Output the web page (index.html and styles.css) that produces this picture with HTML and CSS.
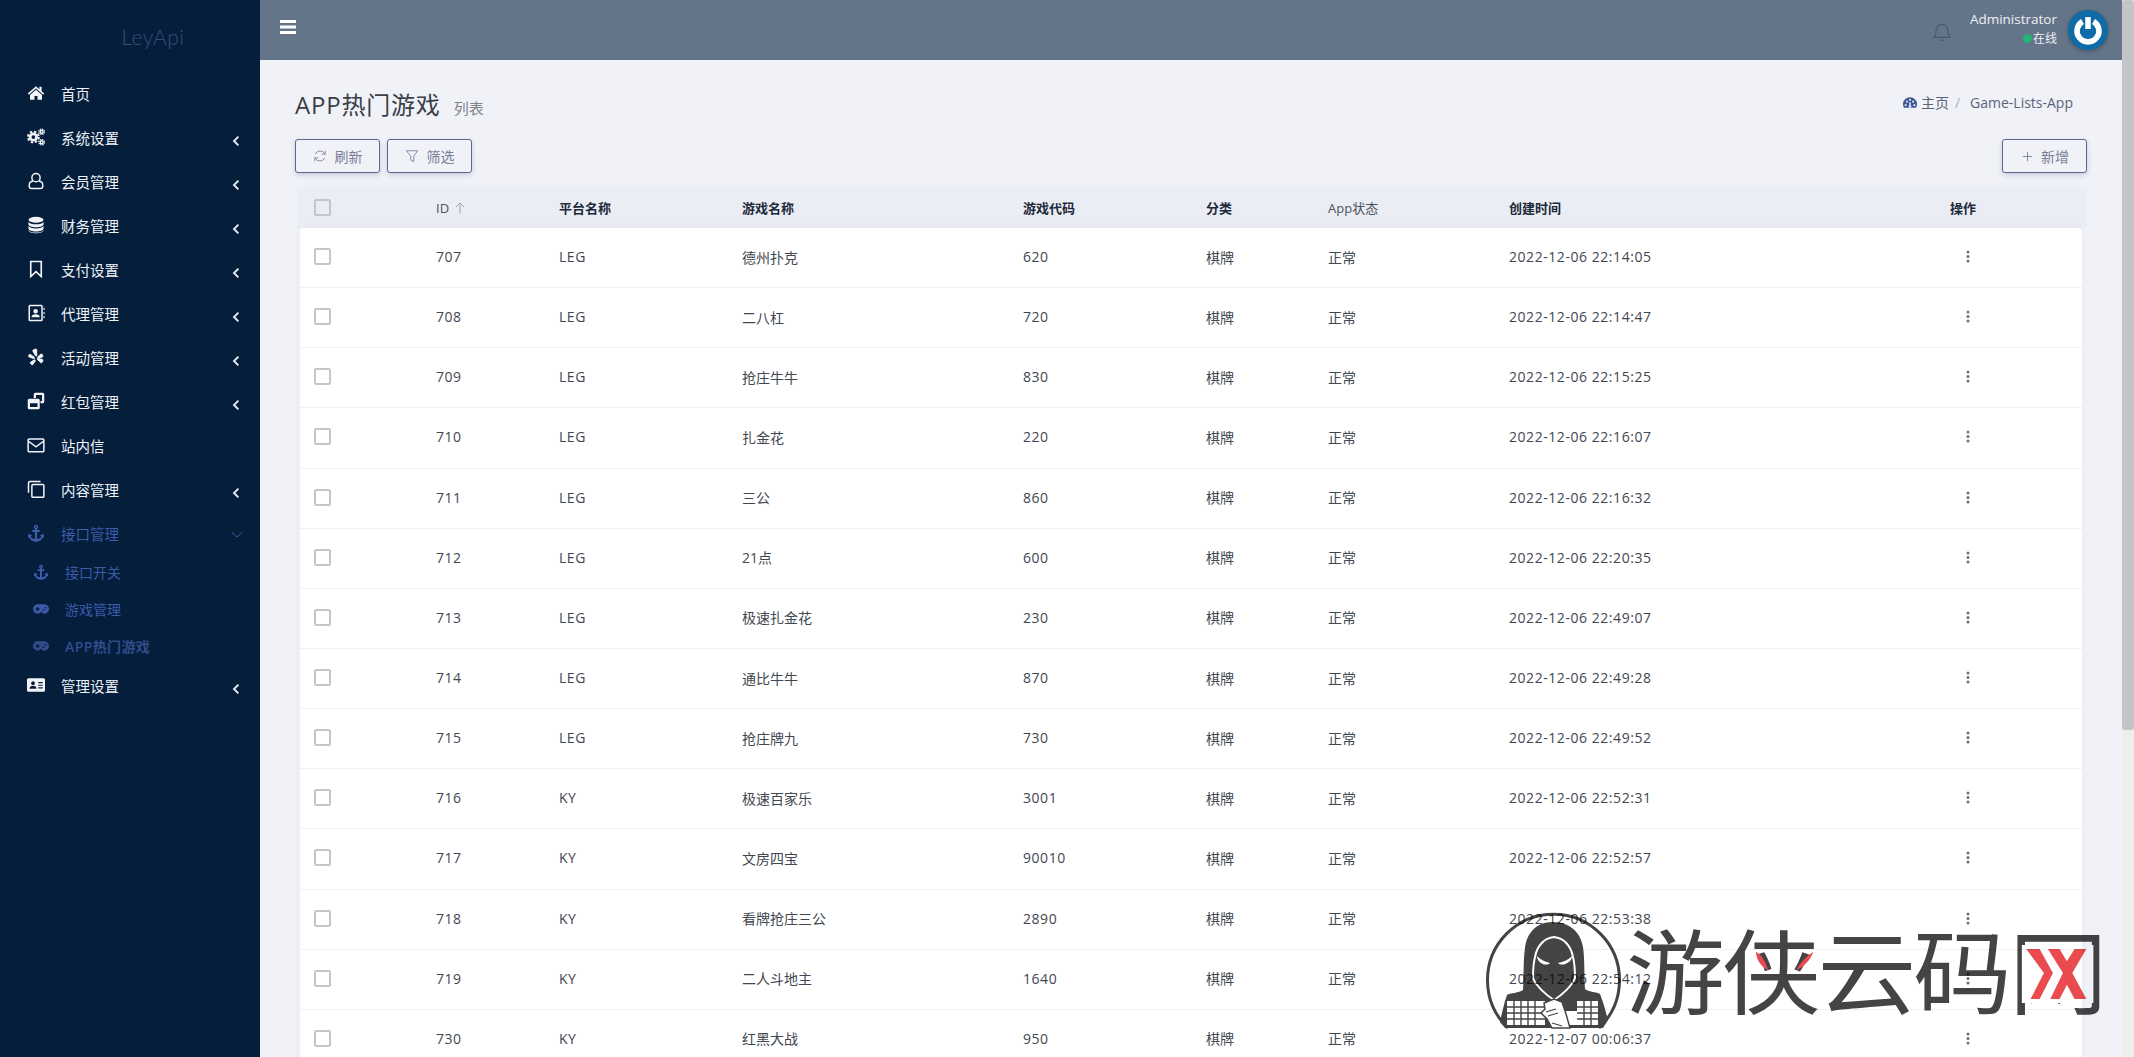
FILE: index.html
```html
<!DOCTYPE html>
<html lang="zh-CN">
<head>
  <meta charset="UTF-8">
  <title>APP热门游戏 - LeyApi</title>
  <link rel="stylesheet" href="styles.css">
</head>
<body>
  <!-- icones usados no menu -->
  <svg class="sprite" xmlns="http://www.w3.org/2000/svg">
    <symbol id="i-home" viewBox="0 0 24 24"><path d="M12 3 1 12.600l1.500 1.600L12 6l9.500 8.200 1.500-1.600-3.500-3V3.500h-3v3.400zM12 7.600 4 14.500V21h6v-5h4v5h6v-6.500z"/></symbol>
    <symbol id="i-cogs" viewBox="0 0 24 24">
      <g fill="none" stroke="currentColor">
        <circle cx="8.500" cy="12" r="4.300" stroke-width="3.600"/>
        <circle cx="8.500" cy="12" r="7.200" stroke-width="2.600" stroke-dasharray="3.200 2.450"/>
        <circle cx="19.500" cy="5" r="2" stroke-width="1.900"/>
        <circle cx="19.500" cy="5" r="3.700" stroke-width="1.600" stroke-dasharray="1.900 1"/>
        <circle cx="19.500" cy="19" r="2" stroke-width="1.900"/>
        <circle cx="19.500" cy="19" r="3.700" stroke-width="1.600" stroke-dasharray="1.900 1"/>
      </g>
    </symbol>
    <symbol id="i-user" viewBox="0 0 24 24"><g fill="none" stroke="currentColor" stroke-width="2"><circle cx="12" cy="7.500" r="5.500"/><path d="M8 12c-3 .5-5 2.500-5 5.500V19a3 3 0 0 0 3 3h12a3 3 0 0 0 3-3v-1.500c0-3-2-5-5-5.500"/></g></symbol>
    <symbol id="i-db" viewBox="0 0 24 24"><ellipse cx="12" cy="5" rx="10" ry="4"/><path d="M2 7.500C3 10 7 11 12 11s9-1 10-3.500V11c0 2.500-4.500 4-10 4S2 13.500 2 11zM2 13c1 2.500 5 3.500 10 3.500S21 15.500 22 13v3.500c0 2.500-4.500 4-10 4s-10-1.500-10-4zM2 18.500C3 21 7 22 12 22s9-1 10-3.500V19c0 2.500-4.500 4-10 4S2 21.500 2 19z"/></symbol>
    <symbol id="i-bookmark" viewBox="0 0 24 24"><path fill="none" stroke="currentColor" stroke-width="2.200" d="M5 2h14v20l-7-6.500L5 22z"/></symbol>
    <symbol id="i-book" viewBox="0 0 24 24"><path fill-rule="evenodd" d="M4 1h15a2 2 0 0 1 2 2v18a2 2 0 0 1-2 2H4a2 2 0 0 1-2-2V3a2 2 0 0 1 2-2zm0 2v18h15V3zm7.500 3.500a3 3 0 0 1 3 3 3 3 0 0 1-6 0 3 3 0 0 1 3-3zM6 17.500c0-3 2-4 5.500-4s5.500 1 5.500 4z"/><path d="M22 5h1.500v3H22zM22 10.500h1.500v3H22zM22 16h1.500v3H22z"/></symbol>
    <symbol id="i-yelp" viewBox="0 0 24 24"><path stroke="currentColor" stroke-width="1.200" stroke-linejoin="round" d="M11 1.500 8.500 2.500c-.8.400-1 1-.6 1.800l3.400 6c.6 1 1.700.7 1.700-.5V2.500c0-.8-.8-1.300-2-1zM3 12l6 2c1.300.3 1.500-1.200.7-1.800L4.500 8.500c-.7-.5-1.400-.3-1.700.5l-.6 2c-.1.600.2.900.8 1zM4.500 20.500l1.700 1.500c.6.500 1.200.5 1.700-.1l3-4.500c.7-1-.3-2-1.400-1.500L5 18.800c-.8.400-1 1.100-.5 1.700zM14 15.500l4.500 4c.7.500 1.300.3 1.700-.4l1-2.400c.3-.7 0-1.300-.7-1.500L15 13.800c-1.300-.3-1.800.9-1 1.700zM14.500 11.500c-.8 1-.2 2 1 1.700l5-1.300c.8-.2 1-.8.700-1.500l-1-1.900c-.4-.7-1-.8-1.700-.2z"/></symbol>
    <symbol id="i-restore" viewBox="0 0 24 24"><path fill-rule="evenodd" d="M11 1h10a2 2 0 0 1 2 2v10a2 2 0 0 1-2 2h-3v-3h2V4H12v4H9V3a2 2 0 0 1 2-2z"/><path fill-rule="evenodd" d="M3 9h12a2 2 0 0 1 2 2v10a2 2 0 0 1-2 2H3a2 2 0 0 1-2-2V11a2 2 0 0 1 2-2zm1 6v5h10v-5z"/></symbol>
    <symbol id="i-mail" viewBox="0 0 24 24"><path fill="none" stroke="currentColor" stroke-width="2" d="M3 4h18a1.500 1.500 0 0 1 1.500 1.500v14A1.500 1.500 0 0 1 21 21H3a1.500 1.500 0 0 1-1.500-1.500v-14A1.500 1.500 0 0 1 3 4zM2 7l10 7.500L22 7"/></symbol>
    <symbol id="i-copy" viewBox="0 0 24 24"><path fill="none" stroke="currentColor" stroke-width="2" d="M18 2H4a2 2 0 0 0-2 2v13M8 6h13a1.500 1.500 0 0 1 1.500 1.500v14A1.500 1.500 0 0 1 21 23H8a1.500 1.500 0 0 1-1.500-1.500v-14A1.500 1.500 0 0 1 8 6z"/></symbol>
    <symbol id="i-anchor" viewBox="0 0 24 24"><path fill-rule="evenodd" d="M12 1a3 3 0 0 1 1.500 5.600V8H17v2.500h-3.500V20c3-.3 5-1.800 5.500-3.500L17 15l5-2 1 5.500-1.500-1C20 21 16 23.500 12 23.500S4 21 2.500 17.500l-1.500 1L2 13l5 2-2 1.500c.5 1.700 2.500 3.200 5.500 3.500v-9.500H7V8h3.500V6.600A3 3 0 0 1 12 1zm0 2a1 1 0 1 0 0 2 1 1 0 0 0 0-2z"/></symbol>
    <symbol id="i-pad" viewBox="0 0 24 16"><path fill-rule="evenodd" d="M7 1h10a7 7 0 0 1 0 14c-2 0-3.300-1-4-2h-2c-.7 1-2 2-4 2A7 7 0 0 1 7 1zM5.800 5v2H4v2h1.800v2h2V9h2V7h-2V5zm10 3.500a1.300 1.300 0 1 0 0 2.600 1.300 1.300 0 0 0 0-2.600zm3-3.500a1.300 1.300 0 1 0 0 2.600 1.300 1.300 0 0 0 0-2.600z"/></symbol>
    <symbol id="i-card" viewBox="0 0 24 20"><path fill-rule="evenodd" d="M2 1h20a2 2 0 0 1 2 2v14a2 2 0 0 1-2 2H2a2 2 0 0 1-2-2V3a2 2 0 0 1 2-2zm6 4a2.500 2.500 0 1 0 0 5 2.500 2.500 0 0 0 0-5zM3.500 15h9c0-3-1.500-4-4.500-4s-4.500 1-4.500 4zM15 6v1.500h6V6zm0 3.500V11h6V9.500zm0 3.500v1.500h6V13z"/></symbol>
    <symbol id="i-left" viewBox="0 0 10 14"><path fill="none" stroke="currentColor" stroke-width="2.400" d="M8 1.500 2.500 7 8 12.500"/></symbol>
    <symbol id="i-dots" viewBox="0 0 4 13"><circle cx="2" cy="2" r="1.500"/><circle cx="2" cy="6.500" r="1.500"/><circle cx="2" cy="11" r="1.500"/></symbol>
  </svg>

  <aside class="sidebar">
    <div class="brand">LeyApi</div>
    <nav class="menu">
      <a class="item"><svg class="ico"><use href="#i-home"/></svg><span>首页</span></a>
      <a class="item"><svg class="ico"><use href="#i-cogs"/></svg><span>系统设置</span><svg class="arrow"><use href="#i-left"/></svg></a>
      <a class="item"><svg class="ico"><use href="#i-user"/></svg><span>会员管理</span><svg class="arrow"><use href="#i-left"/></svg></a>
      <a class="item"><svg class="ico"><use href="#i-db"/></svg><span>财务管理</span><svg class="arrow"><use href="#i-left"/></svg></a>
      <a class="item"><svg class="ico"><use href="#i-bookmark"/></svg><span>支付设置</span><svg class="arrow"><use href="#i-left"/></svg></a>
      <a class="item"><svg class="ico"><use href="#i-book"/></svg><span>代理管理</span><svg class="arrow"><use href="#i-left"/></svg></a>
      <a class="item"><svg class="ico"><use href="#i-yelp"/></svg><span>活动管理</span><svg class="arrow"><use href="#i-left"/></svg></a>
      <a class="item"><svg class="ico"><use href="#i-restore"/></svg><span>红包管理</span><svg class="arrow"><use href="#i-left"/></svg></a>
      <a class="item"><svg class="ico"><use href="#i-mail"/></svg><span>站内信</span></a>
      <a class="item"><svg class="ico"><use href="#i-copy"/></svg><span>内容管理</span><svg class="arrow"><use href="#i-left"/></svg></a>
      <a class="item open"><svg class="ico"><use href="#i-anchor"/></svg><span>接口管理</span><svg class="arrow-down" viewBox="0 0 12 8"><path fill="none" stroke="currentColor" d="M1 1.500 6 6l5-4.500"/></svg></a>
      <div class="submenu">
        <a class="sub"><svg class="ico-sm"><use href="#i-anchor"/></svg><span>接口开关</span></a>
        <a class="sub"><svg class="ico-sm"><use href="#i-pad"/></svg><span>游戏管理</span></a>
        <a class="sub current"><svg class="ico-sm"><use href="#i-pad"/></svg><span>APP热门游戏</span></a>
      </div>
      <a class="item"><svg class="ico"><use href="#i-card"/></svg><span>管理设置</span><svg class="arrow"><use href="#i-left"/></svg></a>
    </nav>
  </aside>

  <div class="main">
    <header class="topbar">
      <svg class="burger" viewBox="0 0 16 14"><path d="M0 0h16v3H0zM0 5.500h16v3H0zM0 11h16v3H0z"/></svg>
      <div class="top-right">
        <svg class="bell" viewBox="0 0 20 22"><path fill="none" stroke="currentColor" stroke-width="1.200" d="M1 17c2-2 2.500-3.500 2.500-8a6.500 6.500 0 0 1 13 0c0 4.500.5 6 2.500 8zM8 20h4"/></svg>
        <div class="who">
          <div class="who-name">Administrator</div>
          <div class="who-state"><i class="dot"></i>在线</div>
        </div>
        <div class="avatar">
          <svg viewBox="0 0 30 30"><path fill="none" stroke="#fff" stroke-width="5.500" d="M9.500 6.500a11 11 0 1 0 11 0"/><path stroke="#fff" stroke-width="5.500" d="M15 2v12"/></svg>
        </div>
      </div>
    </header>

    <section class="content">
      <div class="head">
        <h1>APP热门游戏 <small>列表</small></h1>
        <div class="crumbs">
          <svg viewBox="0 0 16 14"><path fill-rule="evenodd" d="M8 1a8 8 0 0 1 8 8c0 1.500-.4 2.900-1.100 4H1.100A8 8 0 0 1 0 9a8 8 0 0 1 8-8zM7 3v2h2V3zM3.500 5v2h2V5zm7 0v2h2V5zM2 9v2h2V9zm10 0v2h2V9zM7 7l.300 3a1.500 1.500 0 1 0 1.400 0L9 7z"/></svg>
          <span>主页</span><em>/</em><span class="crumb-last">Game-Lists-App</span>
        </div>
      </div>

      <div class="toolbar">
        <button class="btn"><svg viewBox="0 0 16 16"><path fill="none" stroke="currentColor" d="M13.500 5.500A6 6 0 0 0 2.600 6M2.500 10.500A6 6 0 0 0 13.400 10M14 2v4h-4M2 14v-4h4"/></svg>刷新</button>
        <button class="btn"><svg viewBox="0 0 16 16"><path fill="none" stroke="currentColor" d="M1.500 2h13L10 8v6.500L6.500 12.500V8z"/></svg>筛选</button>
        <button class="btn btn-add"><svg viewBox="0 0 12 12"><path fill="none" stroke="currentColor" d="M6 1v10M1 6h10"/></svg>新增</button>
      </div>

      <div class="table">
        <div class="row thead">
          <div><i class="check"></i></div>
          <div class="th-id">ID <svg viewBox="0 0 10 12"><path fill="none" stroke="currentColor" d="M5 11.500V1M1 5l4-4 4 4"/></svg></div>
          <div>平台名称</div><div>游戏名称</div><div>游戏代码</div><div>分类</div><div class="th-app">App状态</div><div>创建时间</div><div>操作</div>
        </div>
        <div class="tbody">
          <div class="row"><div><i class="check"></i></div><div>707</div><div>LEG</div><div>德州扑克</div><div>620</div><div>棋牌</div><div>正常</div><div>2022-12-06 22:14:05</div><div class="ops"><svg><use href="#i-dots"/></svg></div></div>
          <div class="row"><div><i class="check"></i></div><div>708</div><div>LEG</div><div>二八杠</div><div>720</div><div>棋牌</div><div>正常</div><div>2022-12-06 22:14:47</div><div class="ops"><svg><use href="#i-dots"/></svg></div></div>
          <div class="row"><div><i class="check"></i></div><div>709</div><div>LEG</div><div>抢庄牛牛</div><div>830</div><div>棋牌</div><div>正常</div><div>2022-12-06 22:15:25</div><div class="ops"><svg><use href="#i-dots"/></svg></div></div>
          <div class="row"><div><i class="check"></i></div><div>710</div><div>LEG</div><div>扎金花</div><div>220</div><div>棋牌</div><div>正常</div><div>2022-12-06 22:16:07</div><div class="ops"><svg><use href="#i-dots"/></svg></div></div>
          <div class="row"><div><i class="check"></i></div><div>711</div><div>LEG</div><div>三公</div><div>860</div><div>棋牌</div><div>正常</div><div>2022-12-06 22:16:32</div><div class="ops"><svg><use href="#i-dots"/></svg></div></div>
          <div class="row"><div><i class="check"></i></div><div>712</div><div>LEG</div><div>21点</div><div>600</div><div>棋牌</div><div>正常</div><div>2022-12-06 22:20:35</div><div class="ops"><svg><use href="#i-dots"/></svg></div></div>
          <div class="row"><div><i class="check"></i></div><div>713</div><div>LEG</div><div>极速扎金花</div><div>230</div><div>棋牌</div><div>正常</div><div>2022-12-06 22:49:07</div><div class="ops"><svg><use href="#i-dots"/></svg></div></div>
          <div class="row"><div><i class="check"></i></div><div>714</div><div>LEG</div><div>通比牛牛</div><div>870</div><div>棋牌</div><div>正常</div><div>2022-12-06 22:49:28</div><div class="ops"><svg><use href="#i-dots"/></svg></div></div>
          <div class="row"><div><i class="check"></i></div><div>715</div><div>LEG</div><div>抢庄牌九</div><div>730</div><div>棋牌</div><div>正常</div><div>2022-12-06 22:49:52</div><div class="ops"><svg><use href="#i-dots"/></svg></div></div>
          <div class="row"><div><i class="check"></i></div><div>716</div><div>KY</div><div>极速百家乐</div><div>3001</div><div>棋牌</div><div>正常</div><div>2022-12-06 22:52:31</div><div class="ops"><svg><use href="#i-dots"/></svg></div></div>
          <div class="row"><div><i class="check"></i></div><div>717</div><div>KY</div><div>文房四宝</div><div>90010</div><div>棋牌</div><div>正常</div><div>2022-12-06 22:52:57</div><div class="ops"><svg><use href="#i-dots"/></svg></div></div>
          <div class="row"><div><i class="check"></i></div><div>718</div><div>KY</div><div>看牌抢庄三公</div><div>2890</div><div>棋牌</div><div>正常</div><div>2022-12-06 22:53:38</div><div class="ops"><svg><use href="#i-dots"/></svg></div></div>
          <div class="row"><div><i class="check"></i></div><div>719</div><div>KY</div><div>二人斗地主</div><div>1640</div><div>棋牌</div><div>正常</div><div>2022-12-06 22:54:12</div><div class="ops"><svg><use href="#i-dots"/></svg></div></div>
          <div class="row"><div><i class="check"></i></div><div>730</div><div>KY</div><div>红黑大战</div><div>950</div><div>棋牌</div><div>正常</div><div>2022-12-07 00:06:37</div><div class="ops"><svg><use href="#i-dots"/></svg></div></div>
        </div>
      </div>
    </section>
  </div>

  <div class="scrollbar"></div>

  <!-- marca d'agua por cima da tabela -->
  <div class="watermark">
    <svg class="wm-logo" viewBox="0 0 135 120">
      <path fill="none" stroke="#444" stroke-width="3" d="M22 117A66 66 0 1 1 113 117"/>
      <path fill="#444" d="M67 11C50 11 41 22 39 37c-2 14-1 30-2 42-4 3-13 3-16 5-3 8-5 18-7 27l5 6h98l5-8c-2-7-4-16-8-26-3-2-12-2-15-5-1-12 0-28-2-42C95 22 84 11 67 11z"/>
      <path fill="#444" stroke="#fff" stroke-width="2" d="M68 26c-10 1-17 9-19 20-2 8-2 16-2 21 3 8 13 17 21 22 8-5 18-14 21-22 0-5 0-13-2-21-2-11-9-19-19-20z"/>
      <path fill="#fff" d="M51 45c4 4 9 6 13 7-2 2-6 2-9 0-2-1-4-4-4-7zM86 45c-4 4-9 6-14 7 2 2 6 2 9 0 3-1 5-4 5-7z"/>
      <path fill="#fff" d="M21 90h38v24H21zM91 90h21v24H91zM78 100h13v14H78z"/>
      <path stroke="#444" stroke-width="1.400" fill="none" d="M28 90v24M35 90v24M42 90v24M49 90v24M21 96h38M21 102h38M21 108h38M98 90v24M105 90v24M91 96h21M91 102h21M91 108h21"/>
      <path fill="#fff" stroke="#444" stroke-width="1.500" d="M58 92l10-4 8 3 4 12 4 14H66l-5-9-6-6 4-4z"/>
      <path fill="none" stroke="#444" stroke-width="1.200" d="M60 101l10-3M62 105l10-3M66 112l10 3"/>
    </svg>
    <div class="wm-text">游<span class="wm-mid">侠<svg viewBox="0 0 60 20"><path fill="#e94b4f" d="M1 0c5 3 10 10 12 20C6 16 1 8 1 0zM58 0c-2 8-9 16-17 20 4-8 10-15 17-20z"/></svg></span>云码<span class="wm-last">网<svg viewBox="0 0 72 58" preserveAspectRatio="none"><path fill="#fff" d="M0 0h72v58H0z"/><path fill="#e94b4f" transform="translate(0 -4)" d="M4.700 8H18l13.300 24L18 58H9l13.300-26zM26.300 8H38l7.300 12.300L53 8h11.700L50.700 32l14 26H53l-7.700-14.300L38 58h-9.300l12.600-26z"/></svg></span></div>
  </div>
</body>
</html>
```

FILE: styles.css
```css
html, body {
  margin: 0;
  height: 100%;
  overflow: hidden;
  background: #f0f2f8;
  font-family: "Open Sans", "Noto Sans CJK SC", sans-serif;
  font-size: 14px;
  color: #3f4750;
}

.sprite { display: none; }

body { display: flex; }

/* menu lateral */
.sidebar {
  width: 260px;
  flex: none;
  height: 100%;
  background: #041e3c;
}

.brand {
  height: 71px;
  line-height: 74px;
  text-align: center;
  padding-left: 46px;
  box-sizing: border-box;
  font-family: Lato, sans-serif;
  font-size: 21px;
  font-weight: 300;
  color: #34507f;
  letter-spacing: .5px;
}

.item {
  display: flex;
  align-items: center;
  height: 44px;
  padding: 0 0 0 27px;
  color: #eef2f6;
  font-size: 14.500px;
}
.item .ico {
  width: 18px;
  height: 18px;
  margin-right: 16px;
  fill: currentColor;
  color: #f2f4f7;
}
.item .arrow {
  width: 8px;
  height: 12px;
  margin: 8px 20px 0 auto;
  color: #e6ebf0;
}
.item .arrow-down {
  width: 12px;
  height: 8px;
  margin: 3px 17px 0 auto;
}
.item.open { color: #3d5aa8; }
.item.open .ico { color: #3d5aa8; }

.submenu { margin: -2px 0 -1px; }
.sub {
  display: flex;
  align-items: center;
  height: 37px;
  padding-left: 33px;
  color: #3d5aa8;
  font-size: 14px;
}
.sub .ico-sm {
  width: 16px;
  height: 16px;
  margin-right: 16px;
  fill: currentColor;
}
.sub.current { color: #324c8c; font-weight: 600; letter-spacing: .4px; }

/* area principal */
.main {
  flex: 1;
  min-width: 0;
  margin-right: 12px;
}

.topbar {
  height: 60px;
  background: #64758a;
  display: flex;
  align-items: center;
  justify-content: space-between;
  padding: 0 14px 0 20px;
}
.burger { width: 16px; height: 14px; fill: #fff; margin-top: -6px; }

.top-right { display: flex; align-items: center; }
.bell { width: 18px; height: 20px; color: #4a596b; margin-right: 19px; margin-top: 4px; }
.who { text-align: right; color: #eef1f4; font-size: 13.500px; line-height: 19px; margin-right: 11px; margin-top: -2px; }
.who-state { display: flex; align-items: center; justify-content: flex-end; font-size: 12px; }
.dot {
  width: 9px;
  height: 9px;
  border-radius: 50%;
  background: #22b573;
  margin-right: 1px;
}
.avatar {
  width: 40px;
  height: 40px;
  border-radius: 50%;
  background: #0f6ba8;
  display: flex;
  align-items: center;
  justify-content: center;
  box-shadow: 0 1px 4px rgba(0, 0, 0, .3);
}
.avatar svg { width: 30px; height: 30px; }

.content { padding: 0 0 0 35px; }

.head {
  display: flex;
  align-items: flex-start;
  justify-content: space-between;
  padding: 28px 2px 0 0;
  height: 79px;
  box-sizing: border-box;
}
h1 {
  margin: 0;
  font-size: 24px;
  font-weight: 400;
  line-height: 34px;
  color: #3a3f47;
  letter-spacing: .8px;
}
h1 small { font-size: 15px; color: #80858c; margin-left: 6px; letter-spacing: 0; }

.crumbs { display: flex; align-items: center; height: 26px; margin-top: 1px; color: #5a6478; font-size: 14px; margin-right: 47px; }
.crumbs svg { width: 14px; height: 13px; fill: #3d5a96; margin-right: 4px; }
.crumbs em { font-style: normal; color: #a8adb8; margin: 0 10px 0 6px; }

.toolbar { display: flex; gap: 7px; margin-right: 35px; }
.btn {
  height: 34px;
  padding: 0 16.500px;
  display: flex;
  align-items: center;
  gap: 8px;
  font: inherit;
  color: #7b7f9a;
  background: #f0f2f8;
  border: 1px solid #5d6590;
  border-radius: 3px;
  box-shadow: 0 2px 5px rgba(80, 90, 140, .25);
}
.btn svg { width: 14px; height: 14px; }
.btn-add { margin-left: auto; padding: 0 17px 0 19px; }
.btn-add svg { width: 11px; height: 11px; }

/* tabela */
.table { margin: 14px 0 0 5px; }
.row {
  display: grid;
  grid-template-columns: 136px 123px 183px 281px 183px 122px 181px 441px 132px;
  align-items: center;
}
.row > div:first-child { padding-left: 14px; }

.thead {
  height: 41px;
  margin: 0 35px 0 -3px;
  padding-left: 3px;
  background: #ebedf4;
  font-weight: 700;
  font-size: 13px;
  color: #1d2a3a;
}
.th-id, .th-app { font-weight: 400; color: #4a5260; display: flex; align-items: center; gap: 6px; }
.th-id svg { width: 10px; height: 12px; color: #a0a4ac; }

.tbody {
  margin-right: 40px;
  background: #fff;
  border-radius: 4px 4px 0 0;
  box-shadow: 0 0 6px rgba(60, 70, 110, .06);
}
.tbody .row {
  height: 60.150px;
  padding-bottom: 2px;
  border-bottom: 1px solid #eff1f4;
  box-sizing: border-box;
}
/* numeros um pouco mais abertos */
.tbody .row > div:nth-child(2),
.tbody .row > div:nth-child(3),
.tbody .row > div:nth-child(5),
.tbody .row > div:nth-child(8) { letter-spacing: .55px; }

.check {
  display: block;
  width: 17px;
  height: 17px;
  box-sizing: border-box;
  background: #fff;
  border: 2px solid #c4c6ca;
  border-radius: 2px;
}
.thead .check { background: transparent; }

.ops svg { width: 4px; height: 13px; margin-left: 16px; fill: #6a717c; display: block; }

.scrollbar {
  position: fixed;
  top: 0;
  right: 0;
  width: 12px;
  height: 100%;
  background: #eeeeea;
}
.scrollbar::before {
  content: "";
  display: block;
  height: 730px;
  background: #c4c5c7;
  border-radius: 3px;
}

/* marca d'agua */
.watermark {
  position: fixed;
  left: 1486px;
  top: 911px;
  display: flex;
  align-items: center;
  gap: 5px;
  pointer-events: none;
  mix-blend-mode: multiply;
}
.wm-logo { width: 135px; height: 120px; flex: none; }
.wm-text {
  display: flex;
  margin-top: -8px;
  font-family: "Noto Sans CJK SC", sans-serif;
  font-size: 92px;
  line-height: 100px;
  color: #444;
  letter-spacing: -3px;
  transform: scaleX(1.075);
  transform-origin: left center;
}
.wm-mid, .wm-last { position: relative; }
.wm-mid svg {
  position: absolute;
  left: 31px;
  top: 34px;
  width: 56px;
  height: 20px;
}
.wm-last svg {
  position: absolute;
  left: 12px;
  top: 28px;
  width: 67px;
  height: 58px;
}
```
